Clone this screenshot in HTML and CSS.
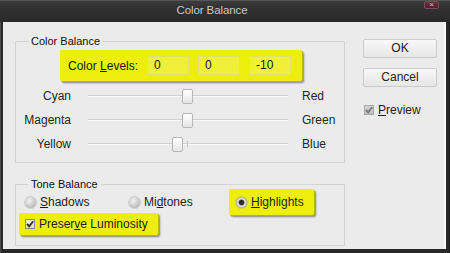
FILE: index.html
```html
<!DOCTYPE html>
<html>
<head>
<meta charset="utf-8">
<title>Color Balance</title>
<link rel="stylesheet" href="styles.css">
</head>
<body>
<div class="window">
  <div class="titlebar">
    <span class="title">Color Balance</span>
    <span class="close">×</span>
  </div>
  <div class="panel">
    <div class="left">
      <fieldset class="group g1">
        <legend>Color Balance</legend>
        <div class="levels hl">
          <span class="lv-label">Color <u>L</u>evels:</span>
          <span class="field">0</span>
          <span class="field">0</span>
          <span class="field">-10</span>
        </div>
        <div class="sliders">
          <div class="srow">
            <span class="sl">Cyan</span>
            <div class="track"><i class="tick"></i><i class="thumb" style="left:94px"></i></div>
            <span class="sr">Red</span>
          </div>
          <div class="srow">
            <span class="sl">Magenta</span>
            <div class="track"><i class="tick"></i><i class="thumb" style="left:94px"></i></div>
            <span class="sr">Green</span>
          </div>
          <div class="srow">
            <span class="sl">Yellow</span>
            <div class="track"><i class="tick"></i><i class="thumb" style="left:84px"></i></div>
            <span class="sr">Blue</span>
          </div>
        </div>
      </fieldset>
      <fieldset class="group g2">
        <legend>Tone Balance</legend>
        <div class="tones">
          <div class="opt o1"><span class="radio"></span><span><u>S</u>hadows</span></div>
          <div class="opt o2"><span class="radio"></span><span>Mi<u>d</u>tones</span></div>
          <div class="opt o3 hl"><span class="radio on"></span><span><u>H</u>ighlights</span></div>
        </div>
        <div class="pres hl">
          <span class="cb cb-y"><svg viewBox="0 0 10 10" width="10" height="10"><path d="M2 4.8 L4.2 7.4 L8.2 2.2" stroke="#2e2e2e" stroke-width="1.8" fill="none"/></svg></span>
          <span>Preser<u>v</u>e Luminosity</span>
        </div>
      </fieldset>
    </div>
    <div class="right">
      <button class="btn">OK</button>
      <button class="btn">Cancel</button>
      <div class="preview">
        <span class="cb cb-g"><svg viewBox="0 0 10 10" width="10" height="10"><path d="M2 4.8 L4.2 7.4 L8.2 2.2" stroke="#7a7a7a" stroke-width="1.8" fill="none"/></svg></span>
        <span><u>P</u>review</span>
      </div>
    </div>
  </div>
</div>
</body>
</html>
```

FILE: styles.css
```css
* { box-sizing: border-box; }
html, body { margin: 0; padding: 0; }
body {
  width: 450px;
  height: 253px;
  overflow: hidden;
  background: #2a2a2a;
  font-family: "Liberation Sans", Arial, sans-serif;
  font-size: 12px;
  color: #1e1e1e;
}
.window {
  width: 450px;
  height: 253px;
  display: flex;
  flex-direction: column;
  background: #282828;
  box-shadow: inset 1px 1px 0 #4a4a4a, inset -1px 0 0 #1a1a1a;
}
.titlebar {
  height: 22px;
  flex: none;
  display: flex;
  align-items: flex-start;
  background: linear-gradient(#3d3d3d, #303030 40%, #2a2a2a);
  box-shadow: inset 0 1px 0 #555;
}
.title {
  flex: 1;
  text-align: center;
  line-height: 21px;
  font-size: 11.5px;
  letter-spacing: -0.1px;
  color: #c9c9c9;
}
.close {
  width: 15px;
  height: 8px;
  margin: 1px 11px 0 0;
  background: linear-gradient(#6a3040, #4a2030);
  border: 1px solid #7a4a55;
  border-radius: 2px;
  color: #d8c8cc;
  font-size: 8px;
  line-height: 6px;
  text-align: center;
}
.panel {
  flex: none;
  height: 227px;
  margin: 0 4px 0 3px;
  background: #ebebeb;
  box-shadow: inset -2px 0 0 #f6f6f6;
  display: flex;
  align-items: flex-start;
  padding: 13px 0 0 12px;
}
.left { width: 330px; }
.right {
  width: 74px;
  margin: 4px 0 0 18px;
  display: flex;
  flex-direction: column;
}
.group {
  margin: 0;
  padding: 0;
  border: 1px solid #d3d3d3;
  min-width: 0;
}
.group legend {
  margin-left: 12px;
  padding: 0 3px;
  font-size: 11px;
  line-height: 13px;
  color: #111;
}
.g1 { padding-bottom: 6px; }
.g2 { margin-top: 15px; padding-bottom: 10px; }

.hl {
  background: #eeee0e;
  border-radius: 2px;
  box-shadow: 1px 1px 0 #b8b800, 2px 2px 2px rgba(0, 0, 0, 0.45);
}
.levels {
  display: flex;
  align-items: center;
  width: 242px;
  height: 31px;
  margin: 2px 0 0 44px;
  padding-left: 8px;
}
.lv-label { width: 79px; color: #1a1a1a; }
.field {
  width: 42px;
  height: 19px;
  margin-right: 9px;
  padding-left: 6px;
  line-height: 17px;
  background: #f0f03a;
  border: 1px solid #e2e266;
  color: #1a1a1a;
}
.sliders { margin-top: 3px; }
.srow {
  display: flex;
  align-items: center;
  height: 24px;
  color: #262626;
}
.sl { width: 55px; text-align: right; }
.track {
  position: relative;
  width: 200px;
  height: 2px;
  margin: 0 14px 0 17px;
  border-top: 1px solid #d2d2d2;
  border-bottom: 1px solid #f8f8f8;
}
.tick {
  position: absolute;
  left: 99px;
  top: -3px;
  width: 1px;
  height: 6px;
  background: #cacaca;
}
.thumb {
  position: absolute;
  top: -7px;
  width: 11px;
  height: 15px;
  border: 1px solid #b6b6b6;
  border-radius: 2px;
  background: linear-gradient(#fefefe, #e6e6e6);
}
.sr { color: #262626; }

.tones {
  display: flex;
  align-items: center;
  height: 26px;
  margin-top: -2px;
  padding-left: 9px;
}
.opt {
  display: flex;
  align-items: center;
  gap: 4px;
  height: 26px;
  color: #1e1e1e;
}
.o1 { width: 104px; }
.o2 { width: 100px; }
.o3 { padding: 0 10px 0 7px; }
.radio {
  width: 11px;
  height: 11px;
  border-radius: 50%;
  background: radial-gradient(circle at 40% 35%, #f4f4f4, #c6c6c6 60%, #a9a9a9);
  box-shadow: 0 0 0 1px rgba(150, 150, 150, 0.35);
}
.radio.on {
  background: radial-gradient(circle, #2e2e2e 0 2.2px, #777 2.8px, #e4e4e4 3.4px, #d4d4d4 4.6px, #9a9a9a 5.5px);
}
.pres {
  display: flex;
  align-items: center;
  gap: 4px;
  width: 139px;
  height: 22px;
  margin: -2px 0 0 3px;
  padding-left: 6px;
}
.cb {
  width: 10px;
  height: 10px;
  display: block;
  border: 1px solid #8c8c8c;
  position: relative;
}
.cb svg { display: block; margin: -1px; }
.cb-y { background: linear-gradient(#f4f4d0, #dcdcb0); }
.cb-g { background: linear-gradient(#d4d4d4, #bdbdbd); border-color: #a8a8a8; }

.btn {
  width: 74px;
  height: 19px;
  margin: 0 0 10px 0;
  padding: 0;
  border: 1px solid #cbcbcb;
  border-radius: 2px;
  background: linear-gradient(#f8f8f8, #e6e6e6);
  font-family: "Liberation Sans", Arial, sans-serif;
  font-size: 12px;
  color: #222;
  line-height: 17px;
}
.preview {
  display: flex;
  align-items: center;
  gap: 4px;
  height: 14px;
  margin: 6px 0 0 1px;
  color: #1e1e1e;
}
```
